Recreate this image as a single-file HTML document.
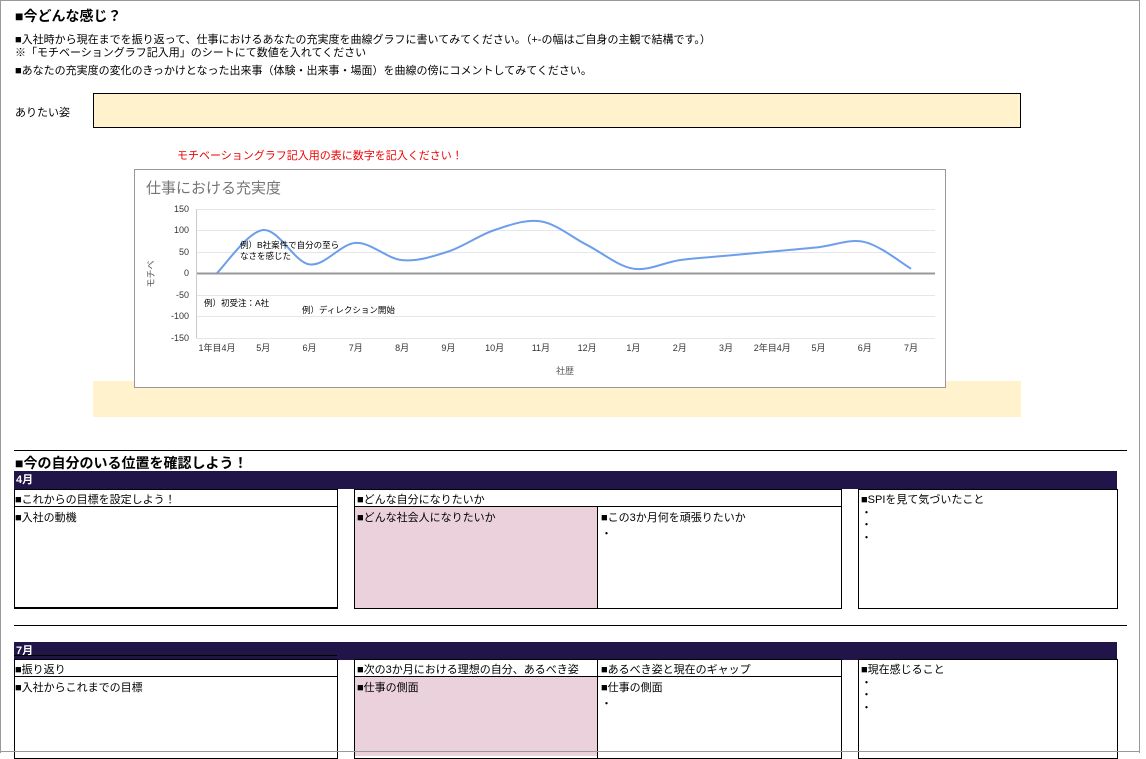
<!DOCTYPE html>
<html><head><meta charset="utf-8"><style>
body{margin:0;width:1146px;height:753px;overflow:hidden;background:#fff;font-family:"Liberation Sans","Noto Sans CJK JP",sans-serif;position:relative;color:#000}
.a{position:absolute;white-space:nowrap}
.s{font-size:11px}
.bar{position:absolute;background:#201449;color:#fff;font-size:11px;font-weight:bold;padding-left:2px;line-height:18px}
.bx{position:absolute;border:1px solid #000;box-sizing:border-box}
.hl{position:absolute;height:1px;background:#000}
.vl{position:absolute;width:1px;background:#000}
</style></head><body>
<div style="position:absolute;left:0;top:0;width:1140px;height:753px;border:1px solid #999;border-bottom:none;box-sizing:border-box"></div>
<div class="a" style="left:15px;top:6px;font-size:14px;font-weight:bold">■今どんな感じ？</div>
<div class="a s" style="left:15px;top:31px">■入社時から現在までを振り返って、仕事におけるあなたの充実度を曲線グラフに書いてみてください。（+-の幅はご自身の主観で結構です。）</div>
<div class="a s" style="left:15px;top:44px">※「モチベーショングラフ記入用」のシートにて数値を入れてください</div>
<div class="a s" style="left:15px;top:62px">■あなたの充実度の変化のきっかけとなった出来事（体験・出来事・場面）を曲線の傍にコメントしてみてください。</div>
<div class="a s" style="left:15px;top:104px">ありたい姿</div>
<div class="bx" style="left:93px;top:93px;width:928px;height:35px;background:#fff2cc"></div>
<div style="position:absolute;left:93px;top:381px;width:928px;height:36px;background:#fff2cc"></div>
<div class="a s" style="left:177px;top:147px;color:#e00">モチベーショングラフ記入用の表に数字を記入ください！</div>
<svg style="position:absolute;left:134px;top:169px" width="812" height="219" viewBox="134 169 812 219">
<rect x="134.5" y="169.5" width="811" height="218" fill="#fff" stroke="#999"/>
<text x="146" y="193" font-size="15" fill="#757575" font-family="Liberation Sans,Noto Sans CJK JP,sans-serif">仕事における充実度</text>
<g stroke="#e6e6e6" stroke-width="1">
<line x1="196" x2="935" y1="209.5" y2="209.5"/><line x1="196" x2="935" y1="230.5" y2="230.5"/><line x1="196" x2="935" y1="252.5" y2="252.5"/><line x1="196" x2="935" y1="295.5" y2="295.5"/><line x1="196" x2="935" y1="316.5" y2="316.5"/><line x1="196" x2="935" y1="338.5" y2="338.5"/></g>
<line x1="196" x2="935" y1="273.5" y2="273.5" stroke="#999" stroke-width="2"/>
<line x1="196.5" x2="196.5" y1="209" y2="338" stroke="#ccc"/>
<g font-size="9" fill="#333" text-anchor="end" font-family="Liberation Sans,sans-serif">
<text x="189" y="212">150</text><text x="189" y="233">100</text><text x="189" y="255">50</text><text x="189" y="276">0</text><text x="189" y="298">-50</text><text x="189" y="319">-100</text><text x="189" y="341">-150</text></g>
<g id="xl" font-size="9" fill="#333" text-anchor="middle" font-family="Liberation Sans,Noto Sans CJK JP,sans-serif"></g>
<text x="565" y="374" font-size="9" fill="#555" text-anchor="middle" font-family="Noto Sans CJK JP,sans-serif">社歴</text>
<text x="154" y="274" font-size="9" fill="#555" text-anchor="middle" transform="rotate(-90 154 274)" font-family="Noto Sans CJK JP,sans-serif">モチベ</text>
<path id="cv" fill="none" stroke="#6d9eeb" stroke-width="2"/>
<g font-size="8.5" fill="#000" font-family="Liberation Sans,Noto Sans CJK JP,sans-serif">
<text x="240" y="248">例）B社案件で自分の至ら</text><text x="240" y="259">なさを感じた</text>
<text x="204" y="306">例）初受注：A社</text><text x="302" y="313">例）ディレクション開始</text></g>
</svg>
<script>
var L=["1年目4月","5月","6月","7月","8月","9月","10月","11月","12月","1月","2月","3月","2年目4月","5月","6月","7月"];
var D=[0,100,20,70,30,50,100,120,65,10,30,40,50,60,72,10];
var P=D.map(function(v,i){return [217+i*46.27,273-v*0.43]});
var g=document.getElementById('xl'),h='';
L.forEach(function(t,i){h+='<text x="'+P[i][0]+'" y="351">'+t+'</text>'});g.innerHTML=h;
var d='M'+P[0];
for(var i=0;i<P.length-1;i++){var p0=P[i-1]||P[i],p1=P[i],p2=P[i+1],p3=P[i+2]||p2;
d+=' C'+(p1[0]+(p2[0]-p0[0])/6)+','+(p1[1]+(p2[1]-p0[1])/6)+' '+(p2[0]-(p3[0]-p1[0])/6)+','+(p2[1]-(p3[1]-p1[1])/6)+' '+p2[0]+','+p2[1];}
document.getElementById('cv').setAttribute('d',d);
</script>
<div class="hl" style="left:14px;top:450px;width:1113px"></div>
<div class="a" style="left:15px;top:453px;font-size:14px;font-weight:bold">■今の自分のいる位置を確認しよう！</div>
<div class="bar" style="left:14px;top:471px;width:1101px">4月</div>
<div class="bx" style="left:14px;top:489px;width:324px;height:120px;border-bottom-width:2px"></div>
<div class="hl" style="left:14px;top:506px;width:324px"></div>
<div class="a s" style="left:15px;top:491px">■これからの目標を設定しよう！</div>
<div class="a s" style="left:15px;top:509px">■入社の動機</div>
<div style="position:absolute;left:354px;top:506px;width:243px;height:102px;background:#ead1dc"></div>
<div class="bx" style="left:354px;top:489px;width:488px;height:120px"></div>
<div class="hl" style="left:354px;top:506px;width:488px"></div>
<div class="vl" style="left:597px;top:506px;height:102px"></div>
<div class="a s" style="left:357px;top:491px">■どんな自分になりたいか</div>
<div class="a s" style="left:357px;top:509px">■どんな社会人になりたいか</div>
<div class="a s" style="left:601px;top:509px">■この3か月何を頑張りたいか<br>・</div>
<div class="bx" style="left:858px;top:489px;width:260px;height:120px"></div>
<div class="a s" style="left:861px;top:491px;line-height:12.5px;padding-top:3px">■SPIを見て気づいたこと<br>・<br>・<br>・</div>
<div class="hl" style="left:14px;top:625px;width:1113px"></div>
<div class="bar" style="left:14px;top:642px;width:1101px">7月</div>
<div class="hl" style="left:14px;top:655px;width:323px"></div>
<div class="bx" style="left:14px;top:659px;width:324px;height:100px"></div>
<div class="hl" style="left:14px;top:676px;width:324px"></div>
<div class="a s" style="left:15px;top:661px">■振り返り</div>
<div class="a s" style="left:15px;top:679px">■入社からこれまでの目標</div>
<div style="position:absolute;left:354px;top:676px;width:243px;height:80px;background:#ead1dc"></div>
<div class="bx" style="left:354px;top:659px;width:488px;height:100px"></div>
<div class="hl" style="left:354px;top:676px;width:488px"></div>
<div class="vl" style="left:597px;top:659px;height:100px"></div>
<div class="a s" style="left:357px;top:661px">■次の3か月における理想の自分、あるべき姿</div>
<div class="a s" style="left:601px;top:661px">■あるべき姿と現在のギャップ</div>
<div class="a s" style="left:357px;top:679px">■仕事の側面</div>
<div class="a s" style="left:601px;top:679px">■仕事の側面<br>・</div>
<div class="bx" style="left:858px;top:659px;width:260px;height:100px"></div>
<div class="a s" style="left:861px;top:661px;line-height:12.5px;padding-top:3px">■現在感じること<br>・<br>・<br>・</div>
<div class="hl" style="left:0;top:751px;width:1140px;background:#999"></div>
</body></html>
